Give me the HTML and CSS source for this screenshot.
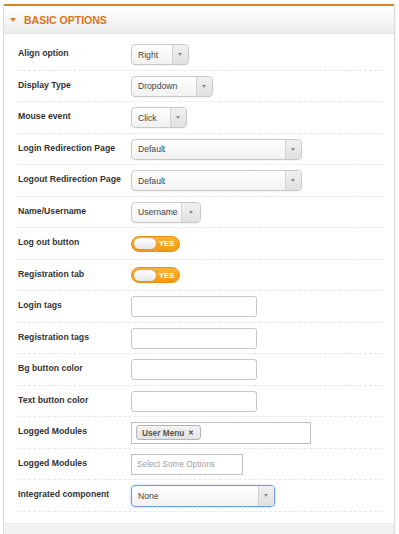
FILE: index.html
```html
<!DOCTYPE html>
<html lang="en">

<head>
    <meta charset="UTF-8">
    <meta name="viewport" content="width=device-width, initial-scale=1.0">
    <title>Basic Options</title>
    <link rel="stylesheet" href="styles.css">
</head>

<body>
    <div class="panel">
        <div class="panelHeader">
            <span class="caret"></span>
            <h2>Basic Options</h2>
        </div>
        <div class="panelBody">
            <div class="row">
                <label>Align option</label>
                <div class="select selectAlign"><span class="value">Right</span><span class="arrow"></span></div>
            </div>
            <div class="row">
                <label>Display Type</label>
                <div class="select selectDisplay"><span class="value">Dropdown</span><span class="arrow"></span></div>
            </div>
            <div class="row">
                <label>Mouse event</label>
                <div class="select selectMouse"><span class="value">Click</span><span class="arrow"></span></div>
            </div>
            <div class="row">
                <label>Login Redirection Page</label>
                <div class="select selectWide"><span class="value">Default</span><span class="arrow"></span></div>
            </div>
            <div class="row">
                <label>Logout Redirection Page</label>
                <div class="select selectWide"><span class="value">Default</span><span class="arrow"></span></div>
            </div>
            <div class="row">
                <label>Name/Username</label>
                <div class="select selectName"><span class="value">Username</span><span class="arrow"></span></div>
            </div>
            <div class="row">
                <label>Log out button</label>
                <div class="toggle"><span class="knob"></span><span class="toggleText">YES</span></div>
            </div>
            <div class="row">
                <label>Registration tab</label>
                <div class="toggle"><span class="knob"></span><span class="toggleText">YES</span></div>
            </div>
            <div class="row">
                <label>Login tags</label>
                <input type="text" class="textInput">
            </div>
            <div class="row">
                <label>Registration tags</label>
                <input type="text" class="textInput">
            </div>
            <div class="row">
                <label>Bg button color</label>
                <input type="text" class="textInput">
            </div>
            <div class="row">
                <label>Text button color</label>
                <input type="text" class="textInput">
            </div>
            <div class="row">
                <label>Logged Modules</label>
                <div class="multi">
                    <span class="tag">User Menu <span class="tagClose">&#x2715;</span></span>
                </div>
            </div>
            <div class="row">
                <label>Logged Modules</label>
                <div class="multi multiEmpty"><span class="placeholder">Select Some Options</span></div>
            </div>
            <div class="row">
                <label>Integrated component</label>
                <div class="select selectNone focused"><span class="value">None</span><span class="arrow"></span></div>
            </div>
        </div>
        <div class="panelFooter"></div>
    </div>
</body>

</html>
```

FILE: styles.css
```css
:root {
    --orange: #e0801f;
    --text: #333333;
    --border: #c9c9c9;
    --font: "Liberation Sans", Arial, sans-serif;
}

body {
    margin: 0;
    background-color: #ffffff;
    font-family: var(--font);
    color: var(--text);
}

.panel {
    margin: 4px 0 0 3px;
    width: 392px;
    box-sizing: border-box;
    border: 1px solid #dcdcdc;
    border-top: 2px solid var(--orange);
    border-radius: 2px 2px 4px 4px;
    box-shadow: 1px 1px 1px rgba(0, 0, 0, 0.06);
}

.panelHeader {
    height: 27px;
    display: flex;
    align-items: center;
    gap: 8px;
    padding-left: 6px;
    background: linear-gradient(#ffffff, #ececec);
    border-bottom: 1px solid #e3e3e3;
}

.panelHeader h2 {
    margin: 0;
    font-size: 10.5px;
    font-weight: bold;
    text-transform: uppercase;
    color: #d9741d;
}

.caret {
    width: 0;
    height: 0;
    border-left: 3.5px solid transparent;
    border-right: 3.5px solid transparent;
    border-top: 4px solid var(--orange);
    margin-top: 1px;
}

.panelBody {
    padding: 5px 12px 11px 14px;
}

.row {
    display: flex;
    align-items: center;
    height: 31.5px;
    box-sizing: border-box;
    border-bottom: 1px dashed #e6e6e6;
}

.row label {
    width: 113px;
    flex: none;
    font-size: 8.7px;
    font-weight: bold;
    color: var(--text);
    margin-top: -2px;
}

.select {
    display: flex;
    height: 21px;
    box-sizing: border-box;
    border: 1px solid var(--border);
    border-radius: 4px;
    background: linear-gradient(#ffffff, #f1f1f1);
    box-shadow: 0 1px 1px rgba(0, 0, 0, 0.05);
    font-size: 8.6px;
    color: #444444;
    margin-top: 1px;
}

.select .value {
    flex: 1;
    display: flex;
    align-items: center;
    padding-left: 6px;
}

.select .arrow {
    width: 15px;
    border-left: 1px solid #d2d2d2;
    background: linear-gradient(#f0f0f0, #e0e0e0);
    border-radius: 0 3px 3px 0;
    position: relative;
}

.select .arrow::after {
    content: "";
    position: absolute;
    left: 5px;
    top: 8px;
    border-left: 2.5px solid transparent;
    border-right: 2.5px solid transparent;
    border-top: 3px solid #8a8a8a;
}

.selectAlign {
    width: 58px;
}

.selectDisplay {
    width: 82px;
}

.selectMouse {
    width: 56px;
}

.selectWide {
    width: 171px;
}

.selectName {
    width: 70px;
}

.selectName .arrow {
    width: 18px;
}

.selectName .arrow::after {
    left: 6.5px;
}

.selectNone {
    width: 144px;
    height: 22px;
}

.focused {
    border-color: #6b9ae0;
    box-shadow: 0 0 3px rgba(88, 151, 251, 0.45);
}

.toggle {
    width: 49px;
    height: 16px;
    box-sizing: border-box;
    border-radius: 8px;
    background: linear-gradient(#fbb236, #f29a12);
    border: 1px solid #e89210;
    display: flex;
    align-items: center;
    padding-left: 2px;
    gap: 3px;
    margin-top: 1px;
}

.knob {
    width: 22px;
    height: 11px;
    border-radius: 6px;
    background: linear-gradient(#ffffff, #e6e6e6);
    box-shadow: 0 0 1px rgba(0, 0, 0, 0.3);
}

.toggleText {
    font-size: 7.5px;
    font-weight: bold;
    color: #ffffff;
}

.textInput {
    width: 126px;
    height: 21px;
    box-sizing: border-box;
    margin: 1px 0 0;
    padding: 0 6px;
    border: 1px solid #c6c6c6;
    border-radius: 3px;
    background-color: #ffffff;
    font-family: var(--font);
}

.multi {
    width: 180px;
    height: 22px;
    box-sizing: border-box;
    border: 1px solid #c0c0c0;
    background-color: #ffffff;
    display: flex;
    align-items: center;
    padding-left: 4px;
    margin-top: 1px;
}

.multiEmpty {
    width: 112px;
    height: 21px;
    padding-left: 5px;
}

.tag {
    height: 15px;
    box-sizing: border-box;
    display: flex;
    align-items: center;
    gap: 4px;
    padding: 0 6px 0 5px;
    border: 1px solid #b5b5b5;
    border-radius: 3px;
    background: linear-gradient(#f4f4f4, #e2e2e2);
    font-size: 8.3px;
    font-weight: bold;
    color: #555555;
}

.tagClose {
    font-size: 7px;
    color: #555555;
}

.placeholder {
    font-size: 8.3px;
    color: #a0a0a0;
}

.panelFooter {
    height: 10px;
    background-color: #f2f2f2;
    border-top: 1px solid #ececec;
    border-radius: 0 0 3px 3px;
}
```
